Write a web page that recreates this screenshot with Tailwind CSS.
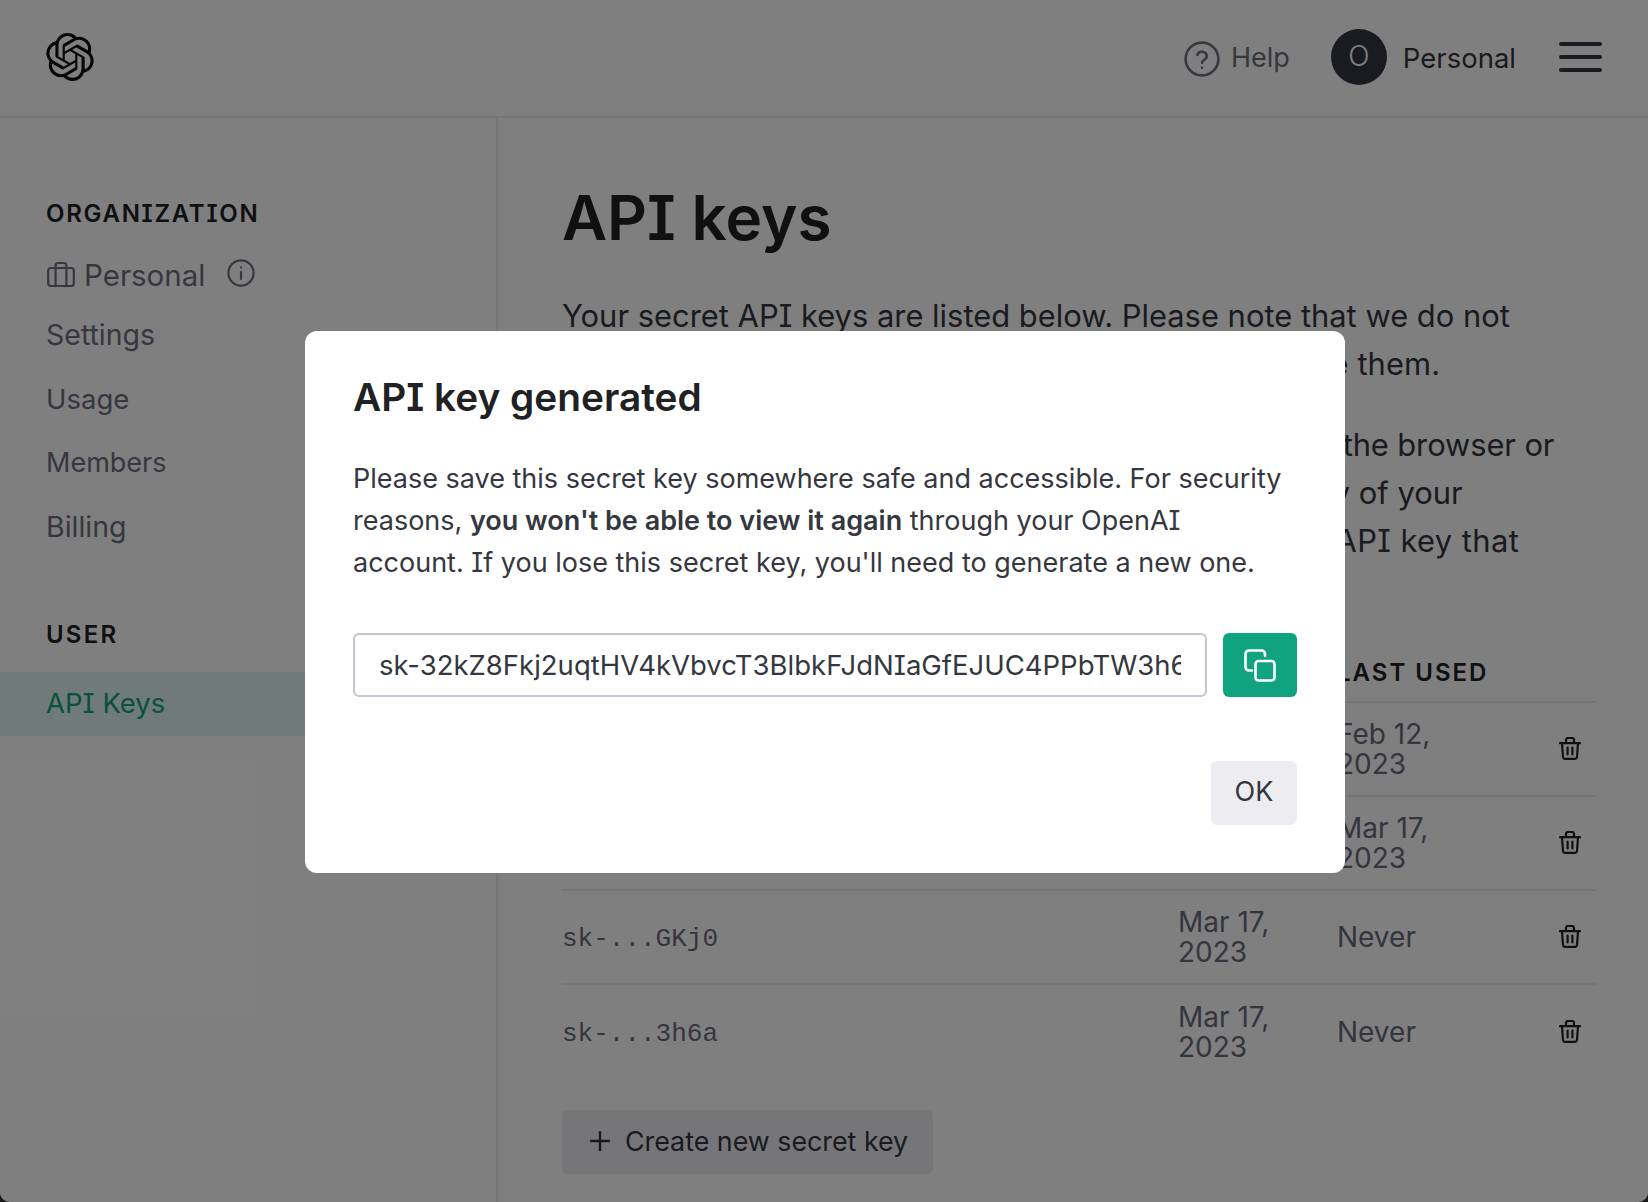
<!DOCTYPE html>
<html lang="en">
<head>
    <meta charset="UTF-8">
    <meta name="viewport" content="width=device-width, initial-scale=1.0">
    <title>API keys</title>
    <script src="https://cdn.jsdelivr.net/npm/@tailwindcss/browser@4"></script>
</head>
<body class="bg-[#1a1a1a] font-['Inter',sans-serif] [font-feature-settings:'cv08'] text-[#353740] overflow-hidden">
    <div class="relative h-[1202px] w-[1648px] overflow-hidden rounded-b-[10px] bg-white">
        <!-- Top nav -->
        <header class="flex h-[118px] items-center border-b-2 border-[#ececf1] pb-[2px] pl-[46px] pr-[46px]">
            <svg class="h-[48px] w-[48px] text-[#0e0e0e]" viewBox="0 0 24 24" fill="currentColor"><path d="M22.2819 9.8211a5.9847 5.9847 0 0 0-.5157-4.9108 6.0462 6.0462 0 0 0-6.5098-2.9A6.0651 6.0651 0 0 0 4.9807 4.1818a5.9847 5.9847 0 0 0-3.9977 2.9 6.0462 6.0462 0 0 0 .7427 7.0966 5.98 5.98 0 0 0 .511 4.9107 6.051 6.051 0 0 0 6.5146 2.9001A5.9847 5.9847 0 0 0 13.2599 24a6.0557 6.0557 0 0 0 5.7718-4.2058 5.9894 5.9894 0 0 0 3.9977-2.9001 6.0557 6.0557 0 0 0-.7475-7.0729zm-9.022 12.6081a4.4755 4.4755 0 0 1-2.8764-1.0408l.1419-.0804 4.7783-2.7582a.7948.7948 0 0 0 .3927-.6813v-6.7369l2.02 1.1686a.071.071 0 0 1 .038.052v5.5826a4.504 4.504 0 0 1-4.4945 4.4944zm-9.6607-4.1254a4.4708 4.4708 0 0 1-.5346-3.0137l.142.0852 4.783 2.7582a.7712.7712 0 0 0 .7806 0l5.8428-3.3685v2.3324a.0804.0804 0 0 1-.0332.0615L9.74 19.9502a4.4992 4.4992 0 0 1-6.1408-1.6464zM2.3408 7.8956a4.485 4.485 0 0 1 2.3655-1.9728V11.6a.7664.7664 0 0 0 .3879.6765l5.8144 3.3543-2.0201 1.1685a.0757.0757 0 0 1-.071 0l-4.8303-2.7865A4.504 4.504 0 0 1 2.3408 7.872zm16.5963 3.8558L13.1038 8.364 15.1192 7.2a.0757.0757 0 0 1 .071 0l4.8303 2.7913a4.4944 4.4944 0 0 1-.6765 8.1042v-5.6772a.79.79 0 0 0-.407-.667zm2.0107-3.0231l-.142-.0852-4.7735-2.7818a.7759.7759 0 0 0-.7854 0L9.409 9.2297V6.8974a.0662.0662 0 0 1 .0284-.0615l4.8303-2.7866a4.4992 4.4992 0 0 1 6.6802 4.66zM8.3065 12.863l-2.02-1.1638a.0804.0804 0 0 1-.038-.0567V6.0742a4.4992 4.4992 0 0 1 7.3757-3.4537l-.142.0805L8.704 5.459a.7948.7948 0 0 0-.3927.6813zm1.0976-2.3654l2.602-1.4998 2.6069 1.4998v2.9994l-2.5974 1.4997-2.6067-1.4997Z"/></svg>
            <div class="ml-auto flex items-center">
                <svg class="mt-[3px] h-[36px] w-[36px] text-[#6e6e80]" viewBox="0 0 36 36" fill="none" stroke="currentColor" stroke-width="2.6" stroke-linecap="round" stroke-linejoin="round"><circle cx="18" cy="18" r="16.4"/><path d="M13.2 14a4.9 4.9 0 0 1 9.5 1.5c0 3.2-4.7 3.8-4.7 6.3"/><path d="M18 26.8h.02"/></svg>
                <span class="ml-[11px] mt-[2px] text-[27px] leading-[42px] text-[#6e6e80]">Help</span>
                <div class="ml-[41px] flex h-[56px] w-[56px] items-center justify-center rounded-full bg-[#353740] pb-[3px] text-[28px] font-light text-white">O</div>
                <span class="ml-[16px] mt-[2px] text-[27.5px] leading-[42px] text-[#353740]">Personal</span>
                <div class="ml-[43px] flex w-[43px] flex-col gap-[9px]">
                    <span class="h-[4px] rounded-full bg-[#353740]"></span>
                    <span class="h-[4px] rounded-full bg-[#353740]"></span>
                    <span class="h-[4px] rounded-full bg-[#353740]"></span>
                </div>
            </div>
        </header>

        <div class="flex h-[1084px]">
            <!-- Sidebar -->
            <aside class="w-[498px] shrink-0 border-r-2 border-[#ececf1] pt-[80px]">
                <h3 class="pl-[46px] text-[24px] font-semibold leading-[32px] tracking-[1.7px] text-[#202123]">ORGANIZATION</h3>
                <div class="mt-[17px] flex h-[56px] items-center pl-[47px] text-[#6e6e80]">
                    <svg class="h-[28px] w-[28px]" viewBox="0 0 28 28" fill="none" stroke="currentColor" stroke-width="2.2" stroke-linejoin="round"><rect x="1.2" y="7" width="25.6" height="18" rx="2.5"/><path d="M8.6 7V25M19.4 7V25M8.6 7V4.4a2.4 2.4 0 0 1 2.4-2.4h6a2.4 2.4 0 0 1 2.4 2.4V7"/></svg>
                    <span class="ml-[9px] text-[29.5px] leading-[42px]">Personal</span>
                    <svg class="ml-[22px] -mt-[4px] h-[28px] w-[28px]" viewBox="0 0 28 28" fill="none" stroke="currentColor" stroke-width="2.2" stroke-linecap="round"><circle cx="14" cy="14" r="12.6"/><path d="M14 13v7M14 8.4h.02"/></svg>
                </div>
                <nav class="leading-[64px] text-[#6e6e80]">
                    <a class="block pl-[46px] text-[28.5px]">Settings</a>
                    <a class="block pl-[46px] text-[27.5px]">Usage</a>
                    <a class="block pl-[46px] text-[27px]">Members</a>
                    <a class="block pl-[46px] text-[28.5px]">Billing</a>
                </nav>
                <h3 class="mt-[60px] pl-[46px] text-[24px] font-semibold leading-[32px] tracking-[2.2px] text-[#202123]">USER</h3>
                <a class="mt-[21px] block h-[64px] bg-[#e0f4f0] pl-[46px] text-[27.5px] leading-[62px] text-[#10a37f]">API Keys</a>
            </aside>

            <!-- Main -->
            <main class="w-[1150px] pl-[64px] pr-[52px] pt-[64px]">
                <h1 class="text-[62px] font-semibold leading-[72px] text-[#202123]">API keys</h1>
                <p class="mt-[38px] text-[30.9px] leading-[48px] text-[#353740]">Your secret API keys are listed below. Please note that we do not<br><span class="tracking-[0.1px]">display your secret API keys again after you generate them.</span></p>
                <p class="mt-[33px] text-[30.9px] leading-[48px] text-[#353740]"><span class="tracking-[-0.1px]">Do not share your API key with others, or expose it in the browser or</span><br>other client-side code. In order to protect the security of your<br><span class="tracking-[0.4px]">account, OpenAI may also automatically rotate any API key that</span><br>we've found has leaked publicly.</p>
                <!-- Keys table -->
                <div class="mt-[28px] grid grid-cols-[616px_159px_1fr] text-[28px] leading-[30px] text-[#6a6a7c]">
                    <div class="flex h-[62px] items-center border-b-2 border-[#ececf1] pt-[4px] text-[24px] font-semibold tracking-[2px] text-[#202123]">SECRET KEY</div>
                    <div class="flex h-[62px] items-center border-b-2 border-[#ececf1] pt-[4px] text-[24px] font-semibold tracking-[2px] text-[#202123]">CREATED</div>
                    <div class="flex h-[62px] items-center border-b-2 border-[#ececf1] pt-[4px] text-[24px] font-semibold tracking-[2px] text-[#202123]">LAST USED</div>

                    <div class="flex h-[94px] items-center border-b-2 border-[#ececf1] pt-[4px] font-['Liberation_Mono',monospace] text-[26px]">sk-...xT3B</div>
                    <div class="flex h-[94px] items-center border-b-2 border-[#ececf1]">Feb 12,<br>2023</div>
                    <div class="flex h-[94px] items-center justify-between border-b-2 border-[#ececf1] pr-[15px]"><span>Feb 12,<br>2023</span><svg class="-mt-[2px] h-[23px] w-[22px] text-[#202123]" viewBox="0 0 22 23" fill="none" stroke="currentColor" stroke-width="2.2" stroke-linecap="round" stroke-linejoin="round"><path d="M1 6.2H21M7 6V3a2 2 0 0 1 2-2h4a2 2 0 0 1 2 2v3M3 6.2l1 14a2 2 0 0 0 2 1.7h10a2 2 0 0 0 2-1.7l1-14M8.6 10.5v7M13.4 10.5v7"/></svg></div>

                    <div class="flex h-[94px] items-center border-b-2 border-[#ececf1] pt-[4px] font-['Liberation_Mono',monospace] text-[26px]">sk-...p9Qw</div>
                    <div class="flex h-[94px] items-center border-b-2 border-[#ececf1]">Mar 17,<br>2023</div>
                    <div class="flex h-[94px] items-center justify-between border-b-2 border-[#ececf1] pr-[15px]"><span>Mar 17,<br>2023</span><svg class="-mt-[2px] h-[23px] w-[22px] text-[#202123]" viewBox="0 0 22 23" fill="none" stroke="currentColor" stroke-width="2.2" stroke-linecap="round" stroke-linejoin="round"><path d="M1 6.2H21M7 6V3a2 2 0 0 1 2-2h4a2 2 0 0 1 2 2v3M3 6.2l1 14a2 2 0 0 0 2 1.7h10a2 2 0 0 0 2-1.7l1-14M8.6 10.5v7M13.4 10.5v7"/></svg></div>

                    <div class="flex h-[94px] items-center border-b-2 border-[#ececf1] pt-[4px] font-['Liberation_Mono',monospace] text-[26px]">sk-...GKj0</div>
                    <div class="flex h-[94px] items-center border-b-2 border-[#ececf1]">Mar 17,<br>2023</div>
                    <div class="flex h-[94px] items-center justify-between border-b-2 border-[#ececf1] pr-[15px]"><span>Never</span><svg class="-mt-[2px] h-[23px] w-[22px] text-[#202123]" viewBox="0 0 22 23" fill="none" stroke="currentColor" stroke-width="2.2" stroke-linecap="round" stroke-linejoin="round"><path d="M1 6.2H21M7 6V3a2 2 0 0 1 2-2h4a2 2 0 0 1 2 2v3M3 6.2l1 14a2 2 0 0 0 2 1.7h10a2 2 0 0 0 2-1.7l1-14M8.6 10.5v7M13.4 10.5v7"/></svg></div>

                    <div class="flex h-[94px] items-center pt-[4px] font-['Liberation_Mono',monospace] text-[26px]">sk-...3h6a</div>
                    <div class="flex h-[94px] items-center">Mar 17,<br>2023</div>
                    <div class="flex h-[94px] items-center justify-between pr-[15px]"><span>Never</span><svg class="-mt-[2px] h-[23px] w-[22px] text-[#202123]" viewBox="0 0 22 23" fill="none" stroke="currentColor" stroke-width="2.2" stroke-linecap="round" stroke-linejoin="round"><path d="M1 6.2H21M7 6V3a2 2 0 0 1 2-2h4a2 2 0 0 1 2 2v3M3 6.2l1 14a2 2 0 0 0 2 1.7h10a2 2 0 0 0 2-1.7l1-14M8.6 10.5v7M13.4 10.5v7"/></svg></div>
                </div>
                <button class="mt-[31px] flex h-[64px] w-[371px] items-center rounded-[6px] bg-[#ececf1] pb-[2px] pl-[28px] text-[26.8px] text-[#353740]">
                    <svg class="h-[20px] w-[20px]" viewBox="0 0 20 20" fill="none" stroke="currentColor" stroke-width="2.4"><path d="M10 0V20M0 10H20"/></svg>
                    <span class="ml-[15px]">Create new secret key</span>
                </button>
            </main>
        </div>

        <!-- Modal overlay -->
        <div class="absolute inset-0 bg-black/50"></div>
        <div class="absolute left-[305px] top-[331px] h-[542px] w-[1040px] rounded-[12px] bg-white p-[48px] text-[#353740]">
            <h2 class="text-[38.8px] font-semibold leading-[36px] text-[#202123]">API key generated</h2>
            <p class="mt-[43px] text-[27px] leading-[42px]">Please save this secret key somewhere safe and accessible. For security<br>reasons, <b class="font-semibold">you won't be able to view it again</b> through your OpenAI<br>account. If you lose this secret key, you'll need to generate a new one.</p>
            <div class="mt-[49px] flex gap-[16px]">
                <input class="h-[64px] w-[854px] rounded-[6px] border-2 border-[#c5c5d2] px-[24px] text-[27.5px] text-[#353740] outline-none" value="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" readonly>
                <button class="flex h-[64px] w-[74px] items-center justify-center rounded-[6px] bg-[#10a37f] text-white">
                    <svg class="h-[33px] w-[32px]" viewBox="0 0 32 33" fill="none" stroke="currentColor" stroke-width="2.6" stroke-linecap="round" stroke-linejoin="round"><rect x="11.5" y="12" width="19" height="19.5" rx="3"/><path d="M8 21.5H5a3.5 3.5 0 0 1-3.5-3.5V5A3.5 3.5 0 0 1 5 1.5h12.5A3.5 3.5 0 0 1 21 5v2"/></svg>
                </button>
            </div>
            <div class="mt-[64px] flex justify-end">
                <button class="h-[64px] w-[86px] rounded-[6px] bg-[#ececf1] pb-[2px] text-[27px] text-[#353740]">OK</button>
            </div>
        </div>
    </div>
</body>
</html>
